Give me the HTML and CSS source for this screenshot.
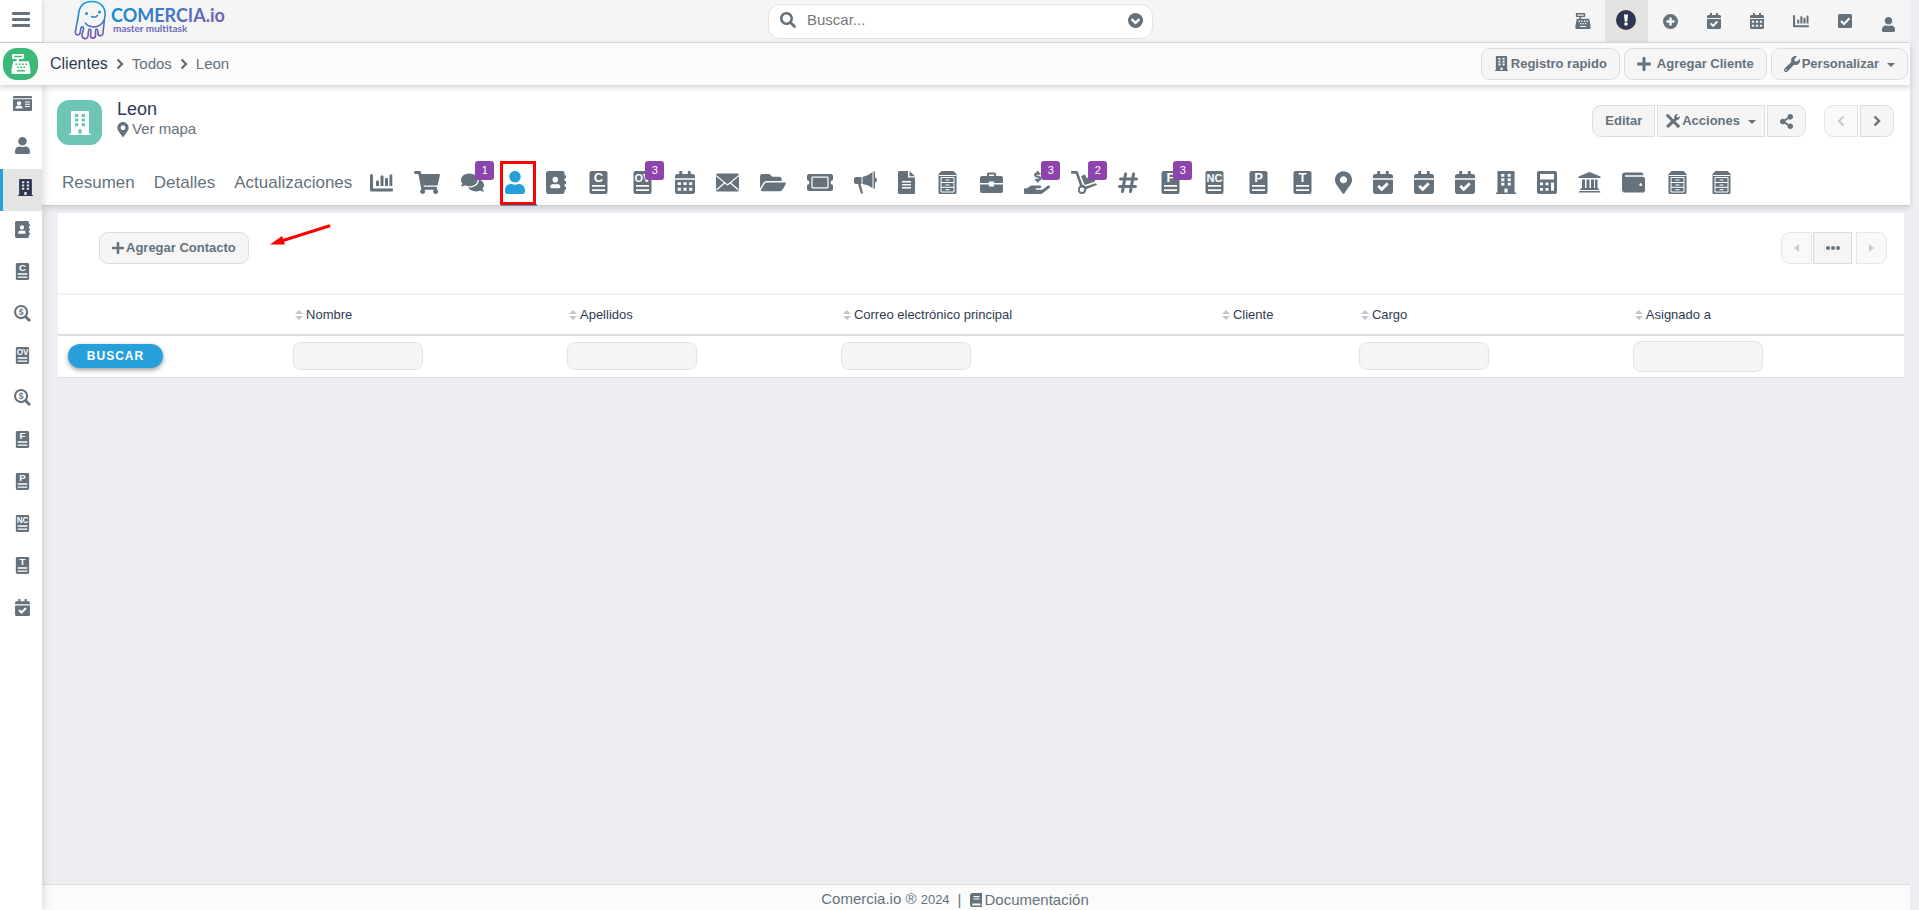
FILE: index.html
```html
<!DOCTYPE html>
<html lang="es">
<head>
<meta charset="utf-8">
<title>Comercia.io - Leon</title>
<link rel="stylesheet" href="styles.css">
</head>
<body>
<svg class="sprite" aria-hidden="true">
  <symbol id="user" viewBox="0 0 448 512"><path d="M224 256c70.700 0 128-57.300 128-128S294.700 0 224 0 96 57.300 96 128s57.300 128 128 128zm89.600 32h-16.700c-22.200 10.200-46.900 16-72.900 16s-50.600-5.800-72.900-16h-16.700C60.200 288 0 348.200 0 422.400V464c0 26.500 21.500 48 48 48h352c26.500 0 48-21.500 48-48v-41.600c0-74.200-60.200-134.400-134.400-134.400z"/></symbol>
  <symbol id="building" viewBox="0 0 448 512"><path fill-rule="evenodd" d="M436 480h-20V24c0-13-11-24-24-24H56C43 0 32 11 32 24v456H12c-7 0-12 5-12 12v20h448v-20c0-7-5-12-12-12zM116 64h72v64h-72zM260 64h72v64h-72zM116 162h72v64h-72zM260 162h72v64h-72zM116 260h72v64h-72zM260 260h72v64h-72zM188 390h72v90h-72z"/></symbol>
  <symbol id="book" viewBox="0 0 448 512"><path d="M436 160c6.600 0 12-5.400 12-12v-40c0-6.600-5.400-12-12-12h-20V48c0-26.500-21.500-48-48-48H48C21.500 0 0 21.500 0 48v416c0 26.500 21.500 48 48 48h320c26.500 0 48-21.500 48-48v-48h20c6.600 0 12-5.400 12-12v-40c0-6.600-5.400-12-12-12h-20v-64h20c6.600 0 12-5.400 12-12v-40c0-6.600-5.400-12-12-12h-20v-64h20zm-228-32c35.300 0 64 28.700 64 64s-28.700 64-64 64-64-28.700-64-64 28.700-64 64-64zm112 236.800c0 10.600-10 19.200-22.400 19.200H118.400C106 384 96 375.400 96 364.800v-19.200c0-31.800 30.100-57.600 67.200-57.600h5c12.300 5.100 25.700 8 39.800 8s27.600-2.900 39.800-8h5c37.100 0 67.200 25.800 67.200 57.600v19.200z"/></symbol>
  <symbol id="calcheck" viewBox="0 0 448 512"><path d="M436 160H12c-6.627 0-12-5.373-12-12v-36c0-26.510 21.490-48 48-48h48V12c0-6.627 5.373-12 12-12h40c6.627 0 12 5.373 12 12v52h128V12c0-6.627 5.373-12 12-12h40c6.627 0 12 5.373 12 12v52h48c26.510 0 48 21.490 48 48v36c0 6.627-5.373 12-12 12zM12 192h424c6.627 0 12 5.373 12 12v260c0 26.510-21.490 48-48 48H48c-26.510 0-48-21.490-48-48V204c0-6.627 5.373-12 12-12zm333.296 95.947l-28.169-28.398c-4.667-4.705-12.265-4.736-16.970-.068L194.120 364.665l-45.980-46.352c-4.667-4.705-12.266-4.736-16.971-.068l-28.397 28.170c-4.705 4.667-4.736 12.265-.068 16.970l82.601 83.269c4.667 4.705 12.265 4.736 16.970.068l142.953-141.805c4.705-4.667 4.736-12.265.068-16.970z"/></symbol>
  <symbol id="calendar" viewBox="0 0 448 512"><path fill-rule="evenodd" d="M436 160H12c-7 0-12-5-12-12v-36c0-26 22-48 48-48h48V12c0-7 5-12 12-12h40c7 0 12 5 12 12v52h128V12c0-7 5-12 12-12h40c7 0 12 5 12 12v52h48c26 0 48 22 48 48v36c0 7-5 12-12 12zM12 192h424c7 0 12 5 12 12v260c0 26-22 48-48 48H48c-26 0-48-22-48-48V204c0-7 5-12 12-12zM60 248v64h72v-64zM188 248v64h72v-64zM316 248v64h72v-64zM60 376v64h72v-64zM188 376v64h72v-64zM316 376v64h72v-64z"/></symbol>
  <symbol id="cart" viewBox="0 0 576 512"><path d="M528.120 301.319l47.273-208C578.806 78.301 567.391 64 551.990 64H159.208l-9.166-44.810C147.758 8.021 137.930 0 126.529 0H24C10.745 0 0 10.745 0 24v16c0 13.255 10.745 24 24 24h69.883l70.248 343.435C147.325 417.100 136 435.222 136 456c0 30.928 25.072 56 56 56s56-25.072 56-56c0-15.674-6.447-29.835-16.824-40h209.647C430.447 426.165 424 440.326 424 456c0 30.928 25.072 56 56 56s56-25.072 56-56c0-22.172-12.888-41.332-31.579-50.405l5.517-24.276c3.413-15.018-8.002-29.319-23.403-29.319H218.117l-6.545-32h293.145c11.206 0 20.920-7.754 23.403-18.681z"/></symbol>
  <symbol id="comments" viewBox="0 0 576 512"><path d="M416 192c0-88.400-93.100-160-208-160S0 103.600 0 192c0 34.300 14.100 65.900 38 92-13.400 30.200-35.500 54.200-35.800 54.500-2.200 2.300-2.800 5.700-1.500 8.700S4.800 352 8 352c36.600 0 66.900-12.300 88.700-25 32.200 15.700 70.300 25 111.300 25 114.900 0 208-71.600 208-160zm122 220c23.900-26 38-57.700 38-92 0-66.900-53.500-124.200-129.300-148.100.9 6.600 1.300 13.300 1.300 20.100 0 105.900-107.700 192-240 192-10.800 0-21.300-.8-31.700-1.900C207.800 439.600 281.800 480 368 480c41 0 79.100-9.200 111.300-25 21.800 12.700 52.100 25 88.700 25 3.200 0 6.100-1.900 7.300-4.800 1.300-2.900.7-6.300-1.500-8.700-.3-.3-22.400-24.200-35.800-54.500z"/></symbol>
  <symbol id="folder" viewBox="0 0 576 512"><path d="M572.694 292.093L500.270 416.248A63.997 63.997 0 0 1 444.989 448H45.025c-18.523 0-30.064-20.093-20.731-36.093l72.424-124.155A64 64 0 0 1 152 256h399.964c18.523 0 30.064 20.093 20.730 36.093zM152 224h328v-48c0-26.510-21.490-48-48-48H272l-64-64H48C21.490 64 0 85.490 0 112v278.046l69.077-118.418C86.214 242.250 117.989 224 152 224z"/></symbol>
  <symbol id="marker" viewBox="0 0 384 512"><path d="M172.268 501.670C26.970 291.031 0 269.413 0 192 0 85.961 85.961 0 192 0s192 85.961 192 192c0 77.413-26.970 99.031-172.268 309.670-9.535 13.774-29.930 13.773-39.464 0zM192 272c44.183 0 80-35.817 80-80s-35.817-80-80-80-80 35.817-80 80 35.817 80 80 80z"/></symbol>
  <symbol id="wallet" viewBox="0 0 512 512"><path d="M461.200 128H80c-8.840 0-16-7.160-16-16s7.160-16 16-16h384c8.840 0 16-7.160 16-16 0-26.510-21.490-48-48-48H64C28.650 32 0 60.650 0 96v320c0 35.350 28.650 64 64 64h397.200c28.020 0 50.800-21.530 50.800-48V176c0-26.470-22.780-48-50.800-48zM416 336c-17.670 0-32-14.330-32-32s14.330-32 32-32 32 14.330 32 32-14.330 32-32 32z"/></symbol>
  <symbol id="search" viewBox="0 0 512 512"><path d="M505 442.700L405.300 343c-4.500-4.500-10.600-7-17-7H372c27.600-35.300 44-79.700 44-128C416 93.100 322.900 0 208 0S0 93.100 0 208s93.100 208 208 208c48.300 0 92.700-16.400 128-44v16.300c0 6.400 2.500 12.500 7 17l99.700 99.700c9.400 9.400 24.600 9.400 33.900 0l28.300-28.300c9.400-9.400 9.400-24.600.1-34zM208 336c-70.700 0-128-57.200-128-128 0-70.700 57.200-128 128-128 70.700 0 128 57.200 128 128 0 70.700-57.200 128-128 128z"/></symbol>
  <symbol id="wrench" viewBox="0 0 512 512"><path d="M507.730 109.100c-2.240-9.030-13.540-12.090-20.120-5.510l-74.360 74.360-67.880-11.310-11.310-67.880 74.360-74.360c6.620-6.620 3.430-17.900-5.660-20.160-47.380-11.740-99.550.91-136.580 37.930-39.640 39.640-50.550 97.100-34.050 147.200L18.740 402.760c-24.990 24.990-24.990 65.510 0 90.500 24.990 24.990 65.510 24.990 90.500 0l213.210-213.210c50.120 16.710 107.470 5.680 147.370-34.220 37.070-37.070 49.700-89.320 37.910-136.730zM64 472c-13.250 0-24-10.750-24-24 0-13.260 10.750-24 24-24s24 10.740 24 24c0 13.250-10.750 24-24 24z"/></symbol>
  <symbol id="share" viewBox="0 0 448 512"><path d="M352 320c-22.608 0-43.387 7.819-59.790 20.895l-102.486-64.054a96.551 96.551 0 0 0 0-41.683l102.486-64.054C308.613 184.181 329.392 192 352 192c53.019 0 96-42.981 96-96S405.019 0 352 0s-96 42.981-96 96c0 7.158.79 14.130 2.276 20.841L155.790 180.895C139.387 167.819 118.608 160 96 160c-53.019 0-96 42.981-96 96s42.981 96 96 96c22.608 0 43.387-7.819 59.790-20.895l102.486 64.054A96.301 96.301 0 0 0 256 416c0 53.019 42.981 96 96 96s96-42.981 96-96-42.981-96-96-96z"/></symbol>
  <symbol id="hand" viewBox="0 0 576 512"><path d="M271.060,144.300l54.270,14.300a8.590,8.590,0,0,1,6.630,8.100c0,4.600-4.090,8.400-9.120,8.400h-35.600a30,30,0,0,1-11.190-2.200c-5.240-2.200-11.280-1.700-15.300,2l-19,17.500a11.680,11.680,0,0,0-2.250,2.660,11.420,11.420,0,0,0,3.880,15.740,83.770,83.770,0,0,0,34.510,11.500V240c0,8.800,7.830,16,17.370,16h17.370c9.550,0,17.380-7.200,17.380-16V222.400c32.930-3.600,57.840-31,53.500-63-3.150-23-22.460-41.300-46.560-47.700L282.680,97.400a8.590,8.590,0,0,1-6.630-8.100c0-4.600,4.090-8.400,9.120-8.400h35.600A30,30,0,0,1,332,83.100c5.230,2.200,11.280,1.700,15.300-2l19-17.500A11.310,11.310,0,0,0,368.470,61a11.430,11.430,0,0,0-3.840-15.780,83.820,83.820,0,0,0-34.520-11.500V16c0-8.800-7.820-16-17.370-16H295.370C285.820,0,278,7.200,278,16V33.600c-32.890,3.600-57.850,31-53.510,63C227.630,119.600,247,137.900,271.060,144.300ZM565.270,328.100c-11.800-10.700-30.200-10-42.600,0L430.270,402a63.640,63.640,0,0,1-40,14H272a16,16,0,0,1,0-32h78.290c15.900,0,30.710-10.900,33.250-26.600a31.200,31.200,0,0,0,.46-5.460A32,32,0,0,0,352,320H192a117.660,117.660,0,0,0-74.100,26.290L71.400,384H16A16,16,0,0,0,0,400v96a16,16,0,0,0,16,16H372.770a64,64,0,0,0,40-14L564,377a32,32,0,0,0,1.280-48.900Z"/></symbol>
  <symbol id="chart" viewBox="0 0 23 23"><path d="M0 4.500Q0 3 1.500 3T3 4.500V17.500H22q1 0 1 1V19.500q0 1-1 1H1.500Q0 20.500 0 19zM6 10.500q0-1 1-1h1q1 0 1 1V15H6zM10.500 5.500q0-1 1-1h1q1 0 1 1V15h-3zM15 8q0-1 1-1h1q1 0 1 1v7h-3zM19.500 4.500q0-1 .8-1h1q1 0 1 1V15h-2.800z"/></symbol>
  <symbol id="envelope" viewBox="0 0 23 23"><rect y="2.500" width="23" height="18" rx="1.500"/><path class="knock" d="M0 4.500L11.500 14L23 4.500M.5 19L8.500 12M22.500 19L14.500 12"/></symbol>
  <symbol id="ticket" viewBox="0 0 26 23"><path d="M2 3H24Q26 3 26 5V9Q23.500 9.500 23.500 11.500T26 14v4q0 2-2 2H2q-2 0-2-2V14q2.500-.5 2.500-2.500T0 9V5Q0 3 2 3z"/><rect class="knock" x="5" y="6.200" width="16" height="10.600" rx=".5"/></symbol>
  <symbol id="bullhorn" viewBox="0 0 23 23"><path d="M2 6H7.500V13H6.500L9 22Q8 23 6.800 22L4 13H2Q0 13 0 11V8Q0 6 2 6zM8.500 6Q14 5 18.500 1V17Q14 13.500 8.500 13zM19.500 0Q21 0 21 1.500V6.500Q23 7 23 9t-2 2.500V16.500Q21 18 19.500 18z"/></symbol>
  <symbol id="file" viewBox="0 0 17 23"><path fill-rule="evenodd" d="M1 0H10V6.500H17V22q0 1-1 1H1q-1 0-1-1V1Q0 0 1 0zM11.500 0L17 5.200H11.500zM4 10v1.500h9V10zM4 13v1.500h9V13zM4 16v1.500h9V16z"/></symbol>
  <symbol id="archive" viewBox="0 0 23 23"><path d="M5.500 0H17.500L20.500 3V21.500q0 1.500-1.500 1.500H4q-1.500 0-1.500-1.500V3z"/><path class="knock thin" d="M3 4.500H20M5 6.500H18V21H5zM5 11.500H18M5 16.300H18M9.500 9H13.500M9.500 14H13.500M9.500 18.700H13.500"/></symbol>
  <symbol id="briefcase" viewBox="0 0 23 23"><path fill-rule="evenodd" d="M7 5V3Q7 1.500 8.500 1.500H14.500Q16 1.500 16 3V5H21q2 0 2 2v5H14V10.500H9V12H0V7Q0 5 2 5zM9 3.500V5h5V3.500zM0 13.500H9V15.500h5v-2h9V20q0 2-2 2H2q-2 0-2-2z"/></symbol>
  <symbol id="dolly" viewBox="0 0 26 23"><path fill-rule="evenodd" d="M0 1Q0 0 1 0H5.500Q6.700 0 7 1L11.500 13.700Q13.500 14 14.600 15.500L24.500 12.200Q26 12.500 25.800 14L15.500 18Q15 23 11 23T7 18.500Q7 16 9 14.600L4.800 2.800H1Q0 2.800 0 2zM11 16.500A2.200 2.200 0 1 0 11 21A2.200 2.200 0 1 0 11 16.500zM10 5L14 3.600 15.500 7 18 6 17 2.500 21 1 24 9.500Q24 10.500 23 11L14.500 13.700Q13.500 13.800 13.200 13z"/></symbol>
  <symbol id="hash" viewBox="0 0 20 23"><path class="line" d="M7.500 3L4.500 20.500M15.500 3L12.500 20.500M2.500 8H18.500M1.500 15.500H17.500"/></symbol>
  <symbol id="calc" viewBox="0 0 20 23"><path fill-rule="evenodd" d="M2 0H18q2 0 2 2V21q0 2-2 2H2q-2 0-2-2V2Q0 0 2 0zM3 3V8.500H17V3zM3 11.500v2.800H6V11.500zM8.500 11.500v2.800h3V11.500zM3 17v2.800H6V17zM8.500 17v2.800h3V17zM14 11.500v8.300h3V11.500z"/></symbol>
  <symbol id="bank" viewBox="0 0 23 23"><path d="M11.500 1L22.500 5.500V7H.5V5.500zM4 8.500H7V17H8.500V8.500h3V17H13V8.500h3V17h1V8.500h2.500V17q1.500 0 1.500 2H2q0-2 2-2zM.5 21.500q0-1.500 1.500-1.500H21q1.500 0 1.500 1.500z"/></symbol>
  <symbol id="plus" viewBox="0 0 14 14"><path d="M5.500 1Q5.500 0 6.500 0h1q1 0 1 1V5.500H13q1 0 1 1v1q0 1-1 1H8.500V13q0 1-1 1h-1q-1 0-1-1V8.500H1q-1 0-1-1v-1q0-1 1-1H5.500z"/></symbol>
  <symbol id="pluscircle" viewBox="0 0 16 16"><path fill-rule="evenodd" d="M8 0A8 8 0 1 0 8 16A8 8 0 1 0 8 0zM6.700 3.700H9.300V6.700H12.300V9.300H9.300V12.300H6.700V9.300H3.700V6.700H6.700z"/></symbol>
  <symbol id="alert" viewBox="0 0 20 20"><circle cx="10" cy="10" r="10"/><path fill="#fff" d="M8 4.500H12L11.300 11.500H8.700z"/><circle cx="10" cy="14" r="1.800" fill="#fff"/></symbol>
  <symbol id="check" viewBox="0 0 14 14"><rect width="14" height="14" rx="1.500"/><path fill="none" stroke="#fff" stroke-width="2" d="M3 7L6 10L11.500 4.200"/></symbol>
  <symbol id="register" viewBox="0 0 18 18"><path fill-rule="evenodd" d="M1 0H11Q11.500 0 11.500 .5V4Q11.500 4.500 11 4.500H7V6.500H16L17.500 14V17q0 1-1 1H1.500q-1 0-1-1V14L2 6.500H5V4.500H1.500Q1 4.500 1 4V.5zM2.800 1.600V3H9.800V1.600zM4 8.500V10H5.500V8.500zM7 8.500V10H8.500V8.500zM10 8.500V10h1.500V8.500zM13 8.500V10h1.500V8.500zM5.500 11.200v1.400H7V11.200zM8.300 11.200v1.400h1.500V11.200zM11.200 11.200v1.400h1.500V11.200zM5.500 14.500v1.200h7V14.500z"/></symbol>
  <symbol id="card" viewBox="0 0 19 15"><path fill-rule="evenodd" d="M1 0H18q1 0 1 1V2.300H0V1Q0 0 1 0zM0 3.200H19V14q0 1-1 1H1q-1 0-1-1zM6 5.200A2 2 0 1 0 6 9.600A2 2 0 1 0 6 5.200zM2.500 12.500h7V11.500Q9.500 10 8 10H4Q2.500 10 2.500 11.500zM12 5.500v1h5v-1zM12 7.800v1h5v-1zM12 10v1h5v-1z"/></symbol>
  <symbol id="lens" viewBox="0 0 18 18"><circle cx="7.500" cy="7.500" r="6.400" fill="none" stroke="currentColor" stroke-width="2.200"/><path fill="none" stroke="currentColor" stroke-width="3" d="M11.800 11.800L17 17"/></symbol>
  <symbol id="tools" viewBox="0 0 14 14"><path fill="none" stroke="currentColor" stroke-width="2.800" d="M1 1L13 13M2 12.500L11 4"/><path d="M0 1L1.500 0 6 4.500 4.500 6zM8.200 4Q8 0 12 0L10.500 2.500 11.800 3.700 14 2Q14 6.300 10 6zM8.500 10L10 8.500 14 12 12 14zM0 12L5 7 7 9 2 14z"/></symbol>
  <symbol id="chevron" viewBox="0 0 8 12"><path fill="none" stroke="currentColor" stroke-width="2.400" d="M1.500 1.500L6 6L1.500 10.500"/></symbol>
  <symbol id="chevleft" viewBox="0 0 8 12"><path fill="none" stroke="currentColor" stroke-width="2" d="M6.500 1.500L2 6L6.500 10.500"/></symbol>
  <symbol id="downcircle" viewBox="0 0 16 16"><circle cx="8" cy="8" r="8"/><path fill="none" stroke="#fff" stroke-width="2.400" d="M3.800 6.500L8 10.500L12.200 6.500"/></symbol>
  <symbol id="sort" viewBox="0 0 8 10"><path d="M0 4L4 0 8 4zM0 6H8L4 10z"/></symbol>
  <symbol id="manual" viewBox="0 0 12 14"><path fill-rule="evenodd" d="M2.500 0H12V10L11.500 12.500 12 13V14H2.500Q0 14 0 11.500V2.500Q0 0 2.500 0zM3.500 3V4.200H9.500V3zM3.500 5.500V6.500H9.500V5.500zM2.500 10.500Q1.500 11.500 2.500 12.500H10.300V10.500z"/></symbol>
  <symbol id="doc" viewBox="0 0 23 23"><rect x="2.500" width="18" height="23" rx="2"/><path fill="#fff" d="M5 14H18V15.800H5zM5 18.200H18V20H5z"/></symbol>
</svg>

<div class="page">
  <header class="topbar">
    <div class="topbar-left">
      <button class="toggle" aria-label="Menú"><span></span><span></span><span></span></button>
      <a class="logo" href="#" aria-label="Comercia.io">
        <svg width="160" height="42" viewBox="0 0 160 42">
          <defs>
            <linearGradient id="brand" gradientUnits="userSpaceOnUse" x1="0" y1="0" x2="8" y2="40"><stop offset="0" stop-color="#00a3e0"/><stop offset=".5" stop-color="#2a86cc"/><stop offset="1" stop-color="#7a53ad"/></linearGradient>
            <linearGradient id="word" x1="0" y1="0" x2="1" y2=".3"><stop offset="0" stop-color="#0a94d8"/><stop offset="1" stop-color="#6a63b4"/></linearGradient>
          </defs>
          <path fill="none" stroke="url(#brand)" stroke-width="1.600" stroke-linecap="round" stroke-linejoin="round" d="M4.500 15C5 6 10 1.500 18 1.500C27 1.500 32 8 31 16C30 24 24 28 17 26.500C14 26 12.500 25 11.500 23M4.500 15L1.500 31C.500 35.500 5.500 36 6 33L7 28C7.500 26 10 26.500 9.500 29L8 34.500C7.500 39.500 13.500 40 14 36L14.500 31C14.800 28.500 17 28.500 17 31L16.500 35.500C16.500 39 21.500 39 21.500 35.500V31C21.500 28.500 23.500 28.500 23.800 31L24 34C24.500 37 29 36 29 33L30.500 19"/>
          <g fill="url(#brand)"><circle cx="12.500" cy="13.500" r="1.500"/><circle cx="25.500" cy="12" r="1.500"/></g>
          <path d="M17 16Q20.500 19 24 15" fill="none" stroke="url(#brand)" stroke-width="1.500"/>
          <text class="word" x="37" y="22" fill="url(#word)">COMERCIA.io</text>
          <text class="tagline" x="39" y="32">master multitask</text>
        </svg>
      </a>
    </div>
    <form class="search">
      <svg class="i16"><use href="#search"/></svg>
      <input type="text" placeholder="Buscar..." aria-label="Buscar">
      <button type="button" aria-label="Opciones de búsqueda"><svg class="i15"><use href="#downcircle"/></svg></button>
    </form>
    <nav class="quick">
      <a href="#" aria-label="Punto de venta"><svg class="i16"><use href="#register"/></svg></a>
      <a href="#" class="alerted" aria-label="Avisos"><svg class="i20"><use href="#alert"/></svg></a>
      <a href="#" aria-label="Crear"><svg class="i15"><use href="#pluscircle"/></svg></a>
      <a href="#" aria-label="Tareas"><svg class="i16"><use href="#calcheck"/></svg></a>
      <a href="#" aria-label="Calendario"><svg class="i16"><use href="#calendar"/></svg></a>
      <a href="#" aria-label="Reportes"><svg class="i16"><use href="#chart"/></svg></a>
      <a href="#" aria-label="Pendientes"><svg class="i14"><use href="#check"/></svg></a>
      <a href="#" class="low" aria-label="Usuario"><svg class="i15"><use href="#user"/></svg></a>
    </nav>
  </header>

  <div class="crumbbar">
    <a class="module" href="#" aria-label="Ventas"><svg class="i20"><use href="#register"/></svg></a>
    <nav class="crumbs">
      <a class="root" href="#">Clientes</a><svg class="sep"><use href="#chevron"/></svg>
      <a href="#">Todos</a><svg class="sep"><use href="#chevron"/></svg>
      <a href="#">Leon</a>
    </nav>
    <div class="actions">
      <button class="btn"><svg class="i15"><use href="#building"/></svg>Registro rapido</button>
      <button class="btn spaced"><svg class="i14"><use href="#plus"/></svg>Agregar Cliente</button>
      <button class="btn"><svg class="i16"><use href="#wrench"/></svg>Personalizar<i class="caret"></i></button>
    </div>
  </div>

  <div class="body">
    <nav class="sidebar">
      <a href="#" aria-label="Contactos"><svg class="i19"><use href="#card"/></svg></a>
      <a href="#" aria-label="Personas"><svg class="i17"><use href="#user"/></svg></a>
      <a href="#" class="current" aria-label="Clientes"><svg class="i17"><use href="#building"/></svg></a>
      <a href="#" aria-label="Agenda"><svg class="i17"><use href="#book"/></svg></a>
      <a href="#" aria-label="Cotizaciones"><svg class="i17 doc" viewBox="0 0 23 23"><use href="#doc"/><text x="11.500" y="11">C</text></svg></a>
      <a href="#" aria-label="Búsqueda de precios"><svg class="i17 money" viewBox="0 0 18 18"><use href="#lens"/><text x="7.500" y="10.500">$</text></svg></a>
      <a href="#" aria-label="Órdenes de venta"><svg class="i17 doc" viewBox="0 0 23 23"><use href="#doc"/><text class="two" x="11.500" y="11">OV</text></svg></a>
      <a href="#" aria-label="Oportunidades"><svg class="i17 money" viewBox="0 0 18 18"><use href="#lens"/><text x="7.500" y="10.500">$</text></svg></a>
      <a href="#" aria-label="Facturas"><svg class="i17 doc" viewBox="0 0 23 23"><use href="#doc"/><text x="11.500" y="11">F</text></svg></a>
      <a href="#" aria-label="Pagos"><svg class="i17 doc" viewBox="0 0 23 23"><use href="#doc"/><text x="11.500" y="11">P</text></svg></a>
      <a href="#" aria-label="Notas de crédito"><svg class="i17 doc" viewBox="0 0 23 23"><use href="#doc"/><text class="two" x="11.500" y="11">NC</text></svg></a>
      <a href="#" aria-label="Tickets"><svg class="i17 doc" viewBox="0 0 23 23"><use href="#doc"/><text x="11.500" y="11">T</text></svg></a>
      <a href="#" aria-label="Actividades"><svg class="i17"><use href="#calcheck"/></svg></a>
    </nav>

    <main class="main">
      <section class="record">
        <div class="record-head">
          <div class="avatar"><svg class="i24"><use href="#building"/></svg></div>
          <div class="record-title">
            <h1>Leon</h1>
            <a href="#"><svg class="pin"><use href="#marker"/></svg>Ver mapa</a>
          </div>
          <div class="record-actions">
            <div class="group">
              <button class="btn">Editar</button>
              <button class="btn tight"><svg class="i14"><use href="#tools"/></svg>Acciones<i class="caret"></i></button>
              <button class="btn icon" aria-label="Compartir"><svg class="i15"><use href="#share"/></svg></button>
            </div>
            <div class="group">
              <button class="btn nav" disabled aria-label="Anterior"><svg class="sep"><use href="#chevleft"/></svg></button>
              <button class="btn nav" aria-label="Siguiente"><svg class="sep"><use href="#chevron"/></svg></button>
            </div>
          </div>
        </div>
        <nav class="tabs">
          <div class="text-tabs"><a href="#">Resumen</a><a href="#">Detalles</a><a href="#">Actualizaciones</a></div>
          <div class="icon-tabs">
            <a href="#"><svg class="w23"><use href="#chart"/></svg></a>
            <a href="#"><svg class="w26"><use href="#cart"/></svg></a>
            <a href="#"><svg class="w23"><use href="#comments"/></svg><span class="badge">1</span></a>
            <a href="#" class="active"><svg class="w20"><use href="#user"/></svg><span class="marked"></span></a>
            <a href="#"><svg class="w20"><use href="#book"/></svg></a>
            <a href="#"><svg class="w23 doc" viewBox="0 0 23 23"><use href="#doc"/><text x="11.500" y="11">C</text></svg></a>
            <a href="#"><svg class="w23 doc" viewBox="0 0 23 23"><use href="#doc"/><text class="two" x="11.500" y="11">OV</text></svg><span class="badge">3</span></a>
            <a href="#"><svg class="w20"><use href="#calendar"/></svg></a>
            <a href="#"><svg class="w23"><use href="#envelope"/></svg></a>
            <a href="#"><svg class="w26"><use href="#folder"/></svg></a>
            <a href="#"><svg class="w26"><use href="#ticket"/></svg></a>
            <a href="#"><svg class="w23"><use href="#bullhorn"/></svg></a>
            <a href="#"><svg class="w17"><use href="#file"/></svg></a>
            <a href="#"><svg class="w23"><use href="#archive"/></svg></a>
            <a href="#"><svg class="w23"><use href="#briefcase"/></svg></a>
            <a href="#"><svg class="w26"><use href="#hand"/></svg><span class="badge">3</span></a>
            <a href="#"><svg class="w26"><use href="#dolly"/></svg><span class="badge">2</span></a>
            <a href="#"><svg class="w20"><use href="#hash"/></svg></a>
            <a href="#"><svg class="w23 doc" viewBox="0 0 23 23"><use href="#doc"/><text x="11.500" y="11">F</text></svg><span class="badge">3</span></a>
            <a href="#"><svg class="w23 doc" viewBox="0 0 23 23"><use href="#doc"/><text class="two" x="11.500" y="11">NC</text></svg></a>
            <a href="#"><svg class="w23 doc" viewBox="0 0 23 23"><use href="#doc"/><text x="11.500" y="11">P</text></svg></a>
            <a href="#"><svg class="w23 doc" viewBox="0 0 23 23"><use href="#doc"/><text x="11.500" y="11">T</text></svg></a>
            <a href="#"><svg class="w17"><use href="#marker"/></svg></a>
            <a href="#"><svg class="w20"><use href="#calcheck"/></svg></a>
            <a href="#"><svg class="w20"><use href="#calcheck"/></svg></a>
            <a href="#"><svg class="w20"><use href="#calcheck"/></svg></a>
            <a href="#"><svg class="w20"><use href="#building"/></svg></a>
            <a href="#"><svg class="w20"><use href="#calc"/></svg></a>
            <a href="#"><svg class="w23"><use href="#bank"/></svg></a>
            <a href="#"><svg class="w23"><use href="#wallet"/></svg></a>
            <a href="#"><svg class="w23"><use href="#archive"/></svg></a>
            <a href="#"><svg class="w23"><use href="#archive"/></svg></a>
          </div>
        </nav>
      </section>

      <section class="panel">
        <div class="toolbar">
          <div class="add">
            <button class="btn"><svg class="i12"><use href="#plus"/></svg>Agregar Contacto</button>
            <svg class="pointer" width="64" height="24" viewBox="0 0 64 24"><path d="M60 3L14 17.500" stroke="red" stroke-width="3" stroke-linecap="round"/><path d="M1 21.500L13 13L16 21.500z" fill="red"/></svg>
          </div>
          <div class="pager">
            <button class="btn" disabled aria-label="Página anterior"><i class="tri left"></i></button>
            <button class="btn more" aria-label="Más páginas"><i></i><i></i><i></i></button>
            <button class="btn" disabled aria-label="Página siguiente"><i class="tri right"></i></button>
          </div>
        </div>
        <table>
          <colgroup><col class="c-action"><col class="c-std"><col class="c-std"><col class="c-mail"><col class="c-client"><col class="c-std"><col></colgroup>
          <thead>
            <tr>
              <th></th>
              <th><svg class="sort"><use href="#sort"/></svg>Nombre</th>
              <th><svg class="sort"><use href="#sort"/></svg>Apellidos</th>
              <th><svg class="sort"><use href="#sort"/></svg>Correo electrónico principal</th>
              <th><svg class="sort"><use href="#sort"/></svg>Cliente</th>
              <th><svg class="sort"><use href="#sort"/></svg>Cargo</th>
              <th><svg class="sort"><use href="#sort"/></svg>Asignado a</th>
            </tr>
          </thead>
          <tbody>
            <tr>
              <td><button class="find">BUSCAR</button></td>
              <td><input type="text" aria-label="Nombre"></td>
              <td><input type="text" aria-label="Apellidos"></td>
              <td><input type="text" aria-label="Correo electrónico principal"></td>
              <td></td>
              <td><input type="text" aria-label="Cargo"></td>
              <td><input type="text" class="tall" aria-label="Asignado a"></td>
            </tr>
          </tbody>
        </table>
      </section>

      <footer class="footer">
        <span>Comercia.io ® <small>2024</small></span><span>|</span><a href="#"><svg class="manual"><use href="#manual"/></svg>Documentación</a>
      </footer>
    </main>
  </div>
</div>
</body>
</html>
```

FILE: styles.css
```css
:root {
  --ink: #2f3b52;
  --muted: #65727c;
  --line: #dddddd;
  --soft: #f5f5f5;
  --canvas: #efeef3;
  --blue: #25a0da;
}
* { box-sizing: border-box; }
body {
  margin: 0;
  background: var(--canvas);
  color: var(--muted);
  font: 15px/20px "Liberation Sans", Arial, sans-serif;
}
a { color: inherit; text-decoration: none; }
button { font-family: inherit; cursor: pointer; }
svg { display: block; fill: currentColor; flex: none; }
.sprite { position: absolute; width: 0; height: 0; }
.doc text, .money text { fill: #fff; font-size: 13px; font-weight: bold; text-anchor: middle; }
.doc .two { font-size: 11px; }
.money text { fill: currentColor; font-size: 9px; }
.knock { fill: none; stroke: #fff; stroke-width: 1.2px; }
.knock.thin { stroke-width: 1px; }
.line { fill: none; stroke: currentColor; stroke-width: 3px; stroke-linecap: round; }

.i12 { width: 12px; height: 12px; }
.i14 { width: 14px; height: 14px; }
.i15 { width: 15px; height: 15px; }
.i16 { width: 16px; height: 16px; }
.i17 { width: 17px; height: 17px; }
.i19 { width: 19px; height: 17px; }
.i20 { width: 20px; height: 20px; }
.i24 { width: 24px; height: 24px; }
.w17, .w20, .w23, .w26 { height: 23px; }
.w17 { width: 17px; }
.w20 { width: 20px; }
.w23 { width: 23px; }
.w26 { width: 26px; }

.page { min-height: 100vh; margin-right: 9px; display: flex; flex-direction: column; }

.topbar {
  display: grid;
  grid-template-columns: calc(50% - 187px) 385px 1fr;
  align-items: center;
  height: 43px;
  background: var(--soft);
  border-bottom: 1px solid var(--line);
}
.topbar-left { display: flex; align-self: stretch; gap: 32px; }
.toggle {
  width: 42px; border: 0; background: #fff; padding: 0 0 3px 0;
  display: flex; flex-direction: column; align-items: center; justify-content: center; gap: 3px;
  box-shadow: 1px 1px 3px #0002;
}
.toggle span { width: 18px; height: 3px; background: var(--muted); border-radius: 1px; }
.word { font: bold 18px "Lato", sans-serif; }
.tagline { font: bold 10px "Lato", sans-serif; fill: #6a68bb; }
.search {
  display: flex; align-items: center; height: 35px; padding: 0 9px 2px 11px; gap: 9px;
  background: #fff; border: 1px solid #e2e2e2; border-radius: 12px;
}
.search input { flex: 1; min-width: 0; border: 0; outline: 0; background: none; font: inherit; }
.search input::placeholder { color: #777; }
.search button { border: 0; background: none; padding: 0; color: var(--muted); }
.quick { display: grid; grid-template-columns: repeat(8, 1fr); justify-self: end; width: 349px; height: 42px; }
.quick a { display: flex; align-items: center; justify-content: center; }
.quick .alerted { background: #e3e3e3; color: #2f3651; padding-bottom: 2px; }
.quick .low { padding-top: 6px; }

.crumbbar {
  z-index: 2; display: flex; align-items: center; height: 42px; padding: 0 2px 0 3px;
  background: #fbfbfb; box-shadow: 0 2px 6px #0003;
}
.module {
  display: flex; align-items: center; justify-content: center; width: 35px; height: 32px;
  border-radius: 14px; background: #3cb878; color: #fff;
}
.crumbs { display: flex; align-items: center; gap: 8px; margin-left: 12px; }
.crumbs .root { color: var(--ink); font-size: 16px; }
.sep { width: 8px; height: 12px; }
.actions { display: flex; gap: 4px; margin-left: auto; }

.btn {
  display: inline-flex; align-items: center; justify-content: center; gap: 2px;
  height: 32px; padding: 0 12px 1px; border: 1px solid var(--line); border-radius: 9px;
  background: var(--soft); color: var(--muted); font-size: 13px; font-weight: bold;
}
.btn.spaced { gap: 6px; }
.btn.tight { padding: 0 8px 1px; }
.btn.icon { width: 39px; padding: 0; }
.btn.nav { width: 34px; padding: 0; }
.btn:disabled { background: #f9f9f9; border-color: #e6e6e6; color: #c5cbd1; }
.caret { border: 4px solid transparent; border-top-color: currentColor; border-bottom: 0; margin: 2px 0 0 6px; }

.body { flex: 1; display: flex; }
.sidebar { z-index: 1; width: 42px; flex: none; background: #fff; box-shadow: 2px 0 8px #0002; }
.sidebar a { display: flex; align-items: center; justify-content: center; height: 42px; padding: 0 0 5px 3px; }
.sidebar .current { background: #e4e4e4; color: #2f3651; border-left: 3px solid var(--blue); padding-left: 5px; }
.main { flex: 1; min-width: 0; display: flex; flex-direction: column; }

.record { background: #fff; padding: 15px 16px 0 15px; height: 121px; display: flex; flex-direction: column; border-bottom: 1px solid #cfcfd2; box-shadow: 0 2px 6px #0002; }
.record-head { display: flex; align-items: center; }
.avatar { width: 45px; height: 45px; border-radius: 12px; background: #6dc5b8; color: #fff; display: flex; align-items: center; justify-content: center; }
.record-title { margin-left: 15px; align-self: flex-start; }
.record-title h1 { margin: 0; color: var(--ink); font-size: 18px; line-height: 18px; font-weight: normal; }
.record-title a { display: flex; align-items: center; gap: 3px; line-height: 22px; }
.pin { width: 12px; height: 15px; }
.record-actions { display: flex; gap: 18px; margin-left: auto; align-self: flex-start; padding-top: 5px; }
.group { display: flex; gap: 2px; }
.group .btn { border-radius: 0; }
.group .btn:first-child { border-radius: 9px 0 0 9px; }
.group .btn:last-child { border-radius: 0 9px 9px 0; }

.tabs { display: flex; gap: 18px; margin-top: auto; padding-left: 5px; height: 45px; }
.text-tabs { display: flex; gap: 19px; align-items: center; font-size: 17px; }
.icon-tabs { display: flex; gap: 21px; }
.icon-tabs a { position: relative; display: flex; align-items: center; }
.icon-tabs .active { color: var(--blue); }
.icon-tabs .active::after { content: ""; position: absolute; left: -4px; right: -12px; bottom: -1px; height: 2px; background: var(--blue); }
.marked { position: absolute; z-index: 1; left: -5px; top: 1px; width: 36px; height: 44px; border: 3px solid red; }
.badge {
  position: absolute; right: -10px; top: 1px; width: 19px; height: 19px; border-radius: 3px;
  background: #8e44ad; color: #fff; font-size: 11px; line-height: 18px; text-align: center;
}

.panel { margin: 7px 6px 0 16px; background: #fff; }
.toolbar { display: flex; justify-content: space-between; padding: 19px 17px 29px 41px; border-bottom: 2px solid #f1f1f1; }
.add { position: relative; }
.pointer { position: absolute; left: 170px; top: -9px; fill: none; }
.pager { display: flex; gap: 1px; }
.pager .btn { width: 31px; padding: 0; border-radius: 9px 0 0 9px; }
.pager .btn:last-child { border-radius: 0 9px 9px 0; margin-left: 3px; }
.pager .more { width: 39px; border-radius: 0; gap: 1px; }
.more i { width: 4px; height: 4px; border-radius: 50%; background: currentColor; }
.tri { border: 4px solid transparent; }
.tri.left { border-right: 5px solid; border-left: 0; }
.tri.right { border-left: 5px solid; border-right: 0; }

table { width: 100%; table-layout: fixed; border-collapse: collapse; }
.c-action { width: 12.3%; }
.c-std { width: 14.84%; }
.c-mail { width: 20.53%; }
.c-client { width: 7.53%; }
th { height: 40px; padding: 0 10px; border-bottom: 2px solid var(--line); color: var(--ink); font-size: 13px; font-weight: normal; text-align: left; }
.sort { display: inline-block; width: 8px; height: 10px; margin-right: 3px; color: #c3c5cd; vertical-align: -1px; }
td { height: 42px; padding: 0 8px; border-bottom: 1px solid var(--line); vertical-align: middle; }
td:first-child { padding-left: 10px; }
td input { display: block; width: 130px; height: 28px; padding: 0 8px; border: 1px solid #e4e4e4; border-radius: 8px; background: var(--soft); font: inherit; }
td input.tall { height: 31px; }
.find {
  display: block; width: 95px; height: 24px; padding: 0; border: 0; border-radius: 12px; background: var(--blue); color: #fff;
  font-size: 12px; font-weight: bold; letter-spacing: 1px; box-shadow: 0 2px 5px #0006;
}

.footer {
  display: flex; justify-content: center; align-items: center; gap: 8px; margin-top: auto; height: 26px; padding: 4px 42px 0 0;
  background: #fbfbfb; border-top: 1px solid var(--line);
}
.footer small { font-size: 13px; }
.footer a { display: flex; align-items: center; gap: 3px; }
.manual { width: 12px; height: 14px; }
```
